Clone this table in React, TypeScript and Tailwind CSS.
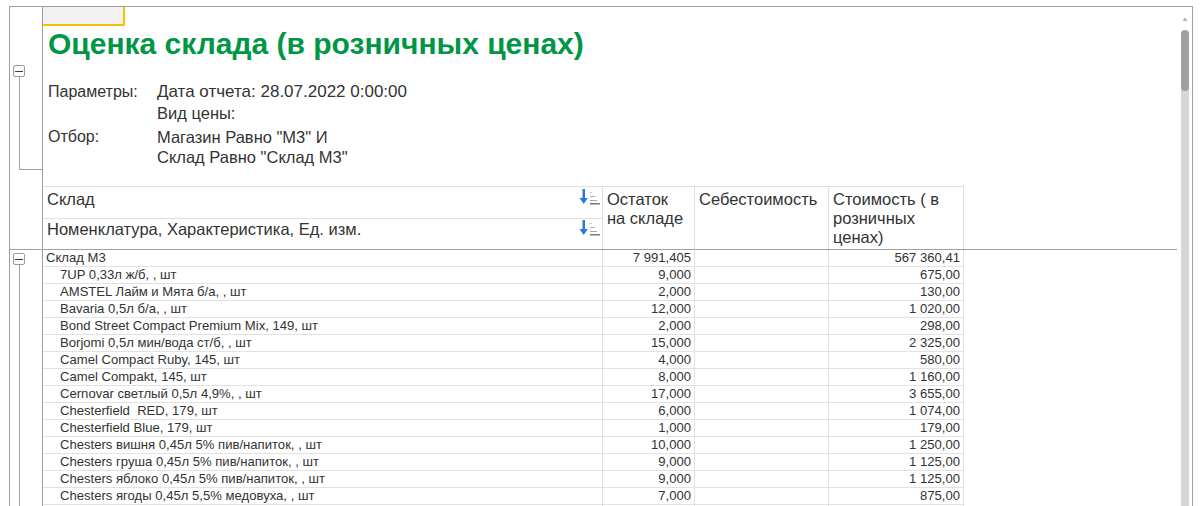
import React from "react";

type Row = {
  name: string;
  qty: string;
  cost: string;
  retail: string;
  group?: boolean;
};

const rows: Row[] = [
  { name: "Склад М3", qty: "7 991,405", cost: "", retail: "567 360,41", group: true },
  { name: "7UP 0,33л ж/б, , шт", qty: "9,000", cost: "", retail: "675,00" },
  { name: "AMSTEL Лайм и Мята б/а, , шт", qty: "2,000", cost: "", retail: "130,00" },
  { name: "Bavaria 0,5л б/а, , шт", qty: "12,000", cost: "", retail: "1 020,00" },
  { name: "Bond Street Compact Premium Mix, 149, шт", qty: "2,000", cost: "", retail: "298,00" },
  { name: "Borjomi 0,5л мин/вода ст/б, , шт", qty: "15,000", cost: "", retail: "2 325,00" },
  { name: "Camel Compact Ruby, 145, шт", qty: "4,000", cost: "", retail: "580,00" },
  { name: "Camel Compakt, 145, шт", qty: "8,000", cost: "", retail: "1 160,00" },
  { name: "Cernovar светлый 0,5л 4,9%, , шт", qty: "17,000", cost: "", retail: "3 655,00" },
  { name: "Chesterfield  RED, 179, шт", qty: "6,000", cost: "", retail: "1 074,00" },
  { name: "Chesterfield Blue, 179, шт", qty: "1,000", cost: "", retail: "179,00" },
  { name: "Chesters вишня 0,45л 5% пив/напиток, , шт", qty: "10,000", cost: "", retail: "1 250,00" },
  { name: "Chesters груша 0,45л 5% пив/напиток, , шт", qty: "9,000", cost: "", retail: "1 125,00" },
  { name: "Chesters яблоко 0,45л 5% пив/напиток, , шт", qty: "9,000", cost: "", retail: "1 125,00" },
  { name: "Chesters ягоды 0,45л 5,5% медовуха, , шт", qty: "7,000", cost: "", retail: "875,00" },
  { name: "", qty: "", cost: "", retail: "" },
];

// значок сортировки в шапке
function SortIcon() {
  return (
    <svg width="21" height="16" viewBox="0 0 21 16" className="shrink-0">
      <rect x="3.5" y="0" width="2.5" height="10" fill="#2b7bd6" />
      <polygon points="0.5,9 8.8,9 4.7,15" fill="#2b7bd6" />
      <rect x="11" y="3" width="2" height="1" fill="#c4c4c4" />
      <rect x="11" y="7" width="5" height="1" fill="#b4b4b4" />
      <rect x="11" y="11" width="7" height="1" fill="#a8a8a8" />
      <rect x="11" y="14" width="10" height="1.5" fill="#7a7a7a" />
    </svg>
  );
}

// кнопка свертки группы
function CollapseBox() {
  return (
    <div className="ml-[3px] flex h-[12px] w-[12px] items-center justify-center rounded-[2px] border border-[#9a9a9a] bg-white">
      <div className="h-px w-[8px] bg-[#3a3a3a]" />
    </div>
  );
}

export default function App() {
  return (
    <div className="h-[506px] w-[1204px] overflow-hidden bg-white pt-[6px] pl-[9px] pr-[11px] font-['Liberation_Sans',Arial,sans-serif] text-[#333]">
      <div className="flex h-[510px] border-t border-l border-r border-[#a0a0a0]">
        {/* основная область отчета */}
        <div className="flex w-[1167px] flex-col">
          {/* заголовок отчета */}
          <div className="flex border-b border-[#a0a0a0]">
            <div className="w-[33px] shrink-0 border-r border-[#a0a0a0] pt-[58px]">
              <CollapseBox />
              <div className="ml-[9px] h-[93px] w-[23px] border-b border-l border-[#a0a0a0]" />
            </div>
            <div className="flex flex-col">
              <div className="h-[19px] w-[82px] border-r-2 border-b-2 border-[#f5c400] bg-[#f2f2f2]" />
              <h1 className="mt-[1px] h-[34px] pl-[5px] text-[30px] leading-[34px] font-bold text-[#009646]">
                Оценка склада (в розничных ценах)
              </h1>

              {/* параметры */}
              <div className="mt-[20px] grid grid-cols-[109px_1fr] pl-[5px] text-[16px]">
                <div className="h-[22px] leading-[21px]">Параметры:</div>
                <div className="h-[22px] text-[17px] leading-[21px]">Дата отчета: 28.07.2022 0:00:00</div>
                <div className="h-[24px]" />
                <div className="h-[24px] text-[16.5px] leading-[21px]">Вид цены:</div>
                <div className="h-[40px] leading-[20px]">Отбор:</div>
                <div className="h-[40px] text-[16.5px] leading-[20px]">
                  Магазин Равно "М3" И
                  <br />
                  Склад Равно "Склад М3"
                </div>
              </div>

              {/* шапка таблицы */}
              <div className="mt-[19px] grid grid-cols-[560px_92px_134px_135px] grid-rows-[32px_30px] border-t border-[#e0e0e0] text-[16.5px] leading-[19px]">
                <div className="flex justify-between border-r border-b border-[#e0e0e0] pt-[3px] pr-[2px] pl-[4px]">
                  <span>Склад</span>
                  <div className="-mt-[1px]">
                    <SortIcon />
                  </div>
                </div>
                <div className="row-span-2 border-r border-[#e0e0e0] pt-[3px] pl-[4px]">
                  Остаток
                  <br />
                  на складе
                </div>
                <div className="row-span-2 border-r border-[#e0e0e0] pt-[3px] pl-[4px]">
                  Себестоимость
                </div>
                <div className="row-span-2 border-r border-[#e0e0e0] pt-[3px] pl-[4px]">
                  Стоимость ( в
                  <br />
                  розничных
                  <br />
                  ценах)
                </div>
                <div className="flex justify-between border-r border-[#e0e0e0] pt-[1px] pr-[2px] pl-[4px]">
                  <span>Номенклатура, Характеристика, Ед. изм.</span>
                  <SortIcon />
                </div>
              </div>
            </div>
          </div>

          {/* строки отчета */}
          <div className="flex flex-1">
            <div className="flex w-[33px] shrink-0 flex-col border-r border-[#a0a0a0] pt-[3px]">
              <CollapseBox />
              <div className="ml-[9px] flex-1 border-l border-[#a0a0a0]" />
            </div>
            <div className="flex flex-col text-[13.1px] leading-[16px]">
              {rows.map((r, i) => (
                <div
                  key={i}
                  className="grid h-[17px] grid-cols-[560px_92px_134px_135px] border-b border-[#e2e2e2]"
                >
                  <div
                    className={
                      r.group
                        ? "border-r border-[#e2e2e2] pl-[3px] whitespace-pre"
                        : "border-r border-[#e2e2e2] pl-[17px] whitespace-pre"
                    }
                  >
                    {r.name}
                  </div>
                  <div className="border-r border-[#e2e2e2] pr-[3px] text-right">{r.qty}</div>
                  <div className="border-r border-[#e2e2e2] pr-[3px] text-right">{r.cost}</div>
                  <div className="border-r border-[#e2e2e2] pr-[3px] text-right">{r.retail}</div>
                </div>
              ))}
            </div>
          </div>
        </div>

        {/* полоса прокрутки */}
        <div className="flex w-[15px] flex-col pl-[4px]">
          <svg width="8" height="5" viewBox="0 0 8 5" className="mt-[10px]">
            <polygon points="1.5,4 6.5,4 4,0.5" fill="#b0b0b0" />
          </svg>
          <div className="relative z-10 mt-[8px] h-[61px] w-[8px] rounded-full bg-[#a0a0a0]" />
          <div className="-mt-[5px] w-[8px] flex-1 bg-[#d6d6d6]" />
        </div>
      </div>
    </div>
  );
}
